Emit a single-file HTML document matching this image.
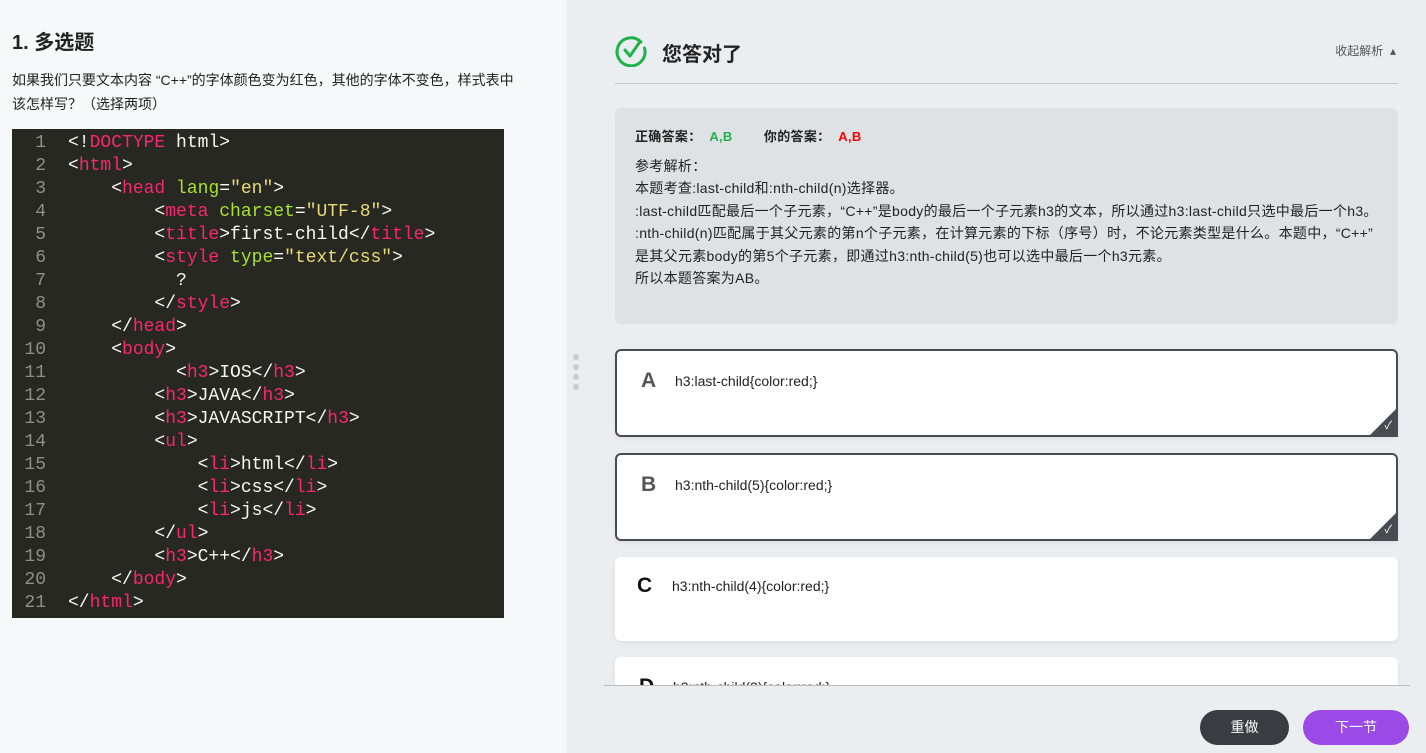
<!DOCTYPE html>
<html><head><meta charset="utf-8"><style>
*{margin:0;padding:0;box-sizing:border-box}
body{width:1426px;height:753px;overflow:hidden;font-family:"Liberation Sans","Noto Sans CJK SC",sans-serif;background:#ebeef1;position:relative}
.left{position:absolute;left:0;top:0;width:567px;height:753px;background:#f7f8fa}
h1{position:absolute;left:12px;top:26px;font-size:20px;font-weight:bold;color:#222}
.q{position:absolute;left:12px;top:68px;font-size:14px;line-height:24px;color:#222;width:530px}
.code{position:absolute;left:12px;top:129px;width:492px;height:489px;background:#272822;font-family:"Liberation Mono",monospace;font-size:18px;line-height:23px;padding-top:2px;white-space:pre;color:#f8f8f2}
.gut{position:absolute;left:0;top:3px;text-align:right;color:#8f908a;padding-right:14px;width:48px}
.src{position:absolute;left:56px;top:3px}
.t{color:#f92672}.a{color:#a6e22e}.s{color:#e6db74}
.right{position:absolute;left:567px;top:0;width:859px;height:753px}
.hd{position:absolute;font-size:20px;font-weight:bold;color:#222}
.fold{position:absolute;right:30px;top:42px;font-size:12px;color:#555}
.hr{position:absolute;left:48px;top:83px;width:783px;height:1px;background:#c5c8cc}
.box{position:absolute;left:48px;top:108px;width:783px;height:216px;background:#dfe2e5;border-radius:6px;padding:18px 20px;font-size:14px;color:#222;line-height:22.5px;letter-spacing:0.3px}
.card{position:absolute;left:48px;width:783px;background:#fff;border-radius:6px;box-shadow:0 2px 6px rgba(0,0,0,.06)}
.sel{border:2px solid #474c52}
.card b{position:absolute;left:24px;top:18px;font-size:21px;color:#555}
.card span{position:absolute;left:58px;top:22px;font-size:14px;color:#222}
.corner{position:absolute;right:-2px;bottom:-2px;width:0;height:0;border-left:30px solid transparent;border-bottom:30px solid #474c52}
.ck{position:absolute;right:4px;bottom:2px;color:#fff;font-size:11px}
.btn{position:absolute;top:710px;height:35px;border-radius:18px;color:#fff;font-size:14px;text-align:center;line-height:35px}
</style></head><body>
<div class="left">
<h1>1. 多选题</h1>
<div class="q">如果我们只要文本内容 “C++”的字体颜色变为红色，其他的字体不变色，样式表中<br>该怎样写？（选择两项）</div>
<div class="code"><div class="gut">1
2
3
4
5
6
7
8
9
10
11
12
13
14
15
16
17
18
19
20
21</div><div class="src">&lt;!<span class="t">DOCTYPE</span> html&gt;
&lt;<span class="t">html</span>&gt;
    &lt;<span class="t">head</span> <span class="a">lang</span>=<span class="s">"en"</span>&gt;
        &lt;<span class="t">meta</span> <span class="a">charset</span>=<span class="s">"UTF-8"</span>&gt;
        &lt;<span class="t">title</span>&gt;first-child&lt;/<span class="t">title</span>&gt;
        &lt;<span class="t">style</span> <span class="a">type</span>=<span class="s">"text/css"</span>&gt;
          ?
        &lt;/<span class="t">style</span>&gt;
    &lt;/<span class="t">head</span>&gt;
    &lt;<span class="t">body</span>&gt;
          &lt;<span class="t">h3</span>&gt;IOS&lt;/<span class="t">h3</span>&gt;
        &lt;<span class="t">h3</span>&gt;JAVA&lt;/<span class="t">h3</span>&gt;
        &lt;<span class="t">h3</span>&gt;JAVASCRIPT&lt;/<span class="t">h3</span>&gt;
        &lt;<span class="t">ul</span>&gt;
            &lt;<span class="t">li</span>&gt;html&lt;/<span class="t">li</span>&gt;
            &lt;<span class="t">li</span>&gt;css&lt;/<span class="t">li</span>&gt;
            &lt;<span class="t">li</span>&gt;js&lt;/<span class="t">li</span>&gt;
        &lt;/<span class="t">ul</span>&gt;
        &lt;<span class="t">h3</span>&gt;C++&lt;/<span class="t">h3</span>&gt;
    &lt;/<span class="t">body</span>&gt;
&lt;/<span class="t">html</span>&gt;</div></div>
</div>
<div class="right">
<svg style="position:absolute;left:48px;top:35px" width="32" height="32" viewBox="0 0 32 32"><path d="M26 7 A14 14 0 1 0 29.5 13" fill="none" stroke="#1fb14a" stroke-width="3" stroke-linecap="round"/><path d="M10 15 L15 21 L24 8" fill="none" stroke="#1fb14a" stroke-width="3" stroke-linecap="round" stroke-linejoin="round"/></svg>
<div class="hd" style="left:95px;top:38px">您答对了</div>
<div class="fold">收起解析 &nbsp;▴</div>
<div class="hr"></div>
<div class="box"><div style="font-weight:bold;margin-bottom:6px;font-size:13px">正确答案：&nbsp; <span style="color:#1fb14a">A,B</span> &nbsp; &nbsp; &nbsp; &nbsp;你的答案：&nbsp; <span style="color:#f00">A,B</span></div>
参考解析：<br>本题考查:last-child和:nth-child(n)选择器。<br>:last-child匹配最后一个子元素，“C++”是body的最后一个子元素h3的文本，所以通过h3:last-child只选中最后一个h3。<br>:nth-child(n)匹配属于其父元素的第n个子元素，在计算元素的下标（序号）时，不论元素类型是什么。本题中，“C++”<br>是其父元素body的第5个子元素，即通过h3:nth-child(5)也可以选中最后一个h3元素。<br>所以本题答案为AB。</div>
<div style="position:absolute;left:6px;top:354px;width:6px">
<div style="width:6px;height:6px;border-radius:3px;background:#c8cbcf;margin-bottom:4px"></div><div style="width:6px;height:6px;border-radius:3px;background:#c8cbcf;margin-bottom:4px"></div><div style="width:6px;height:6px;border-radius:3px;background:#c8cbcf;margin-bottom:4px"></div><div style="width:6px;height:6px;border-radius:3px;background:#c8cbcf"></div></div>
<div class="card sel" style="top:349px;height:88px"><b>A</b><span>h3:last-child{color:red;}</span><div class="corner"></div><div class="ck">✓</div></div>
<div class="card sel" style="top:453px;height:88px"><b>B</b><span>h3:nth-child(5){color:red;}</span><div class="corner"></div><div class="ck">✓</div></div>
<div class="card" style="top:557px;height:84px"><b style="left:22px;top:17px;color:#111">C</b><span style="left:57px;top:21px">h3:nth-child(4){color:red;}</span></div>
<div style="position:absolute;left:0;top:657px;width:859px;height:28px;overflow:hidden"><div class="card" style="top:0;height:84px"><b style="color:#111">D</b><span>h3:nth-child(3){color:red;}</span></div></div>
<div style="position:absolute;left:37px;top:685px;width:806px;height:1px;background:#b9bcc0"></div>
<div class="btn" style="left:633px;width:89px;background:#393c40">重做</div>
<div class="btn" style="left:736px;width:106px;background:#9b4ae8">下一节</div>
</div>
</body></html>
